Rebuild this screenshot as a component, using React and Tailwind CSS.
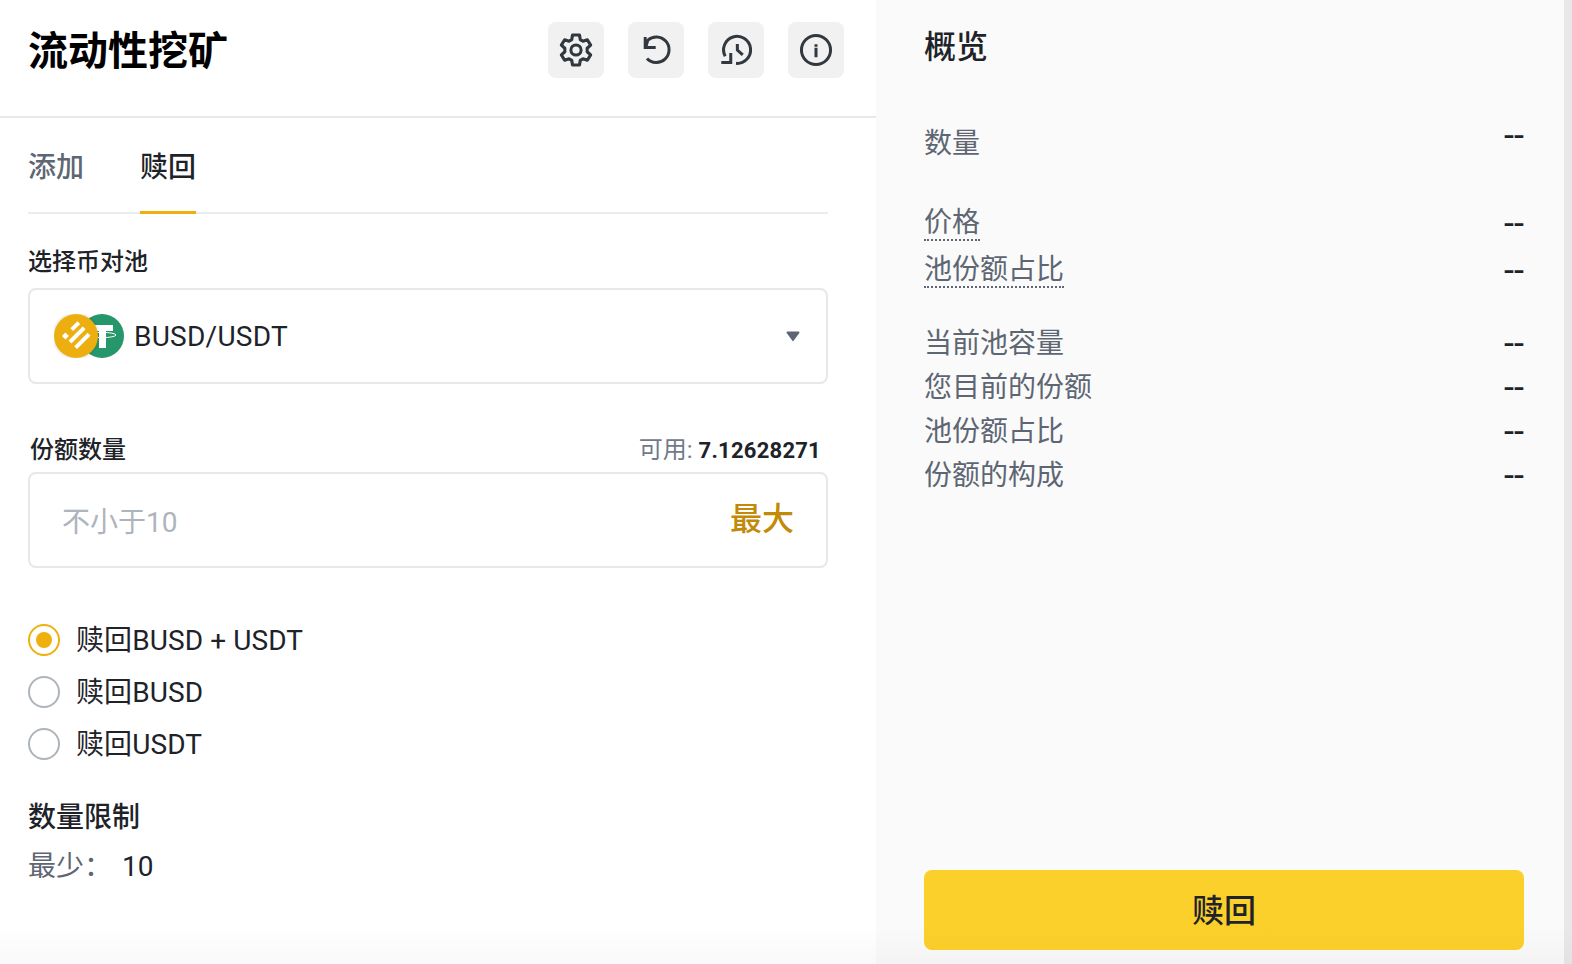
import React from 'react';

const FONT = { fontFamily: 'Roboto, "Noto Sans CJK SC", sans-serif' };

const IconButton = ({ children }) => (
  <button className="w-14 h-14 rounded-lg bg-[#f1f1f1] flex items-center justify-center text-[#32383f]">
    {children}
  </button>
);

const Gear = () => (
  <svg width="36" height="36" viewBox="0 0 24 24" fill="none" stroke="currentColor" strokeWidth="2" strokeLinejoin="round">
    <path
      transform="translate(12 12) scale(1.05) translate(-12 -12)"
      d="M9.8 2.5h4.4l.5 2.9 1.7 1 2.8-.9 2.1 3.4-2.2 2v2.2l2.2 2-2.1 3.4-2.8-.9-1.7 1-.5 2.9H9.8l-.5-2.9-1.7-1-2.8.9-2.1-3.4 2.2-2v-2.2l-2.2-2 2.1-3.4 2.8.9 1.7-1z"
    />
    <circle cx="12" cy="12" r="3.4" />
  </svg>
);

const Undo = () => (
  <svg width="36" height="36" viewBox="0 0 24 24" fill="none" stroke="currentColor" strokeWidth="2">
    <path d="M5.2 10 6.5 5.5A8.5 8.5 0 1 1 6 17.6" />
    <path d="M4.8 3.4v7h7" />
  </svg>
);

const History = () => (
  <svg width="36" height="36" viewBox="0 0 24 24" fill="none" stroke="currentColor" strokeWidth="2">
    <path d="M4.8 16.2A9 9 0 1 1 12 20.9" />
    <path d="M12.9 8v4l3.6 3.3" />
    <path d="M8.5 14v6.4H2.2" />
  </svg>
);

const Info = () => (
  <svg width="36" height="36" viewBox="0 0 24 24" fill="none" stroke="currentColor" strokeWidth="2">
    <circle cx="12" cy="12" r="9.7" />
    <path d="M12 10.5v6.4M12 8.2v1.6" />
  </svg>
);

const PairLogo = () => (
  <svg width="70" height="44" viewBox="0 0 70 44" className="shrink-0">
    <circle cx="48" cy="22" r="22" fill="#26966b" />
    <path d="M37 11h22v6h-7v17h-7V17h-8z" fill="#fff" />
    <ellipse cx="48" cy="21" rx="14" ry="2.6" fill="none" stroke="#fff" strokeWidth="1" />
    <circle cx="22" cy="22" r="24" fill="#000" opacity="0.05" />
    <circle cx="22" cy="22" r="22" fill="#edae10" />
    <g fill="#fff" transform="translate(22 22) rotate(-45)">
      <rect x="-10" y="-10" width="5" height="5" />
      <rect x="1.5" y="-9.5" width="10" height="4" />
      <rect x="-8.5" y="-2" width="20" height="4" />
      <rect x="-8.5" y="6" width="19" height="4" />
    </g>
  </svg>
);

const Radio = ({ label, checked }) => (
  <div className="h-[52px] flex items-center gap-4">
    <span className={`w-8 h-8 rounded-full border-2 flex items-center justify-center ${checked ? 'border-[#efb00e]' : 'border-[#aeb4bc]'}`}>
      {checked && <span className="w-4 h-4 rounded-full bg-[#efb00e]" />}
    </span>
    <span className="pt-[2px] text-[28px] tracking-[0.1px] text-[#1e2329]">{label}</span>
  </div>
);

const Row = ({ label, dotted, className = 'h-11', dashClass = '' }) => (
  <div className={`flex items-center justify-between ${className}`}>
    <span className={`text-[28px] text-[#5e6673] ${dotted ? 'leading-[32px] border-b-2 border-dotted border-[#5e6673]' : 'leading-[36px]'}`}>{label}</span>
    <span className={`text-[36px] leading-none text-[#1e2329] ${dashClass}`}>--</span>
  </div>
);

export default function App() {
  return (
    <div className="relative flex w-[1572px] h-[964px] overflow-hidden bg-white" style={FONT}>
      {/* left: form */}
      <div className="w-[876px] shrink-0 flex flex-col">
        <div className="h-[118px] shrink-0 border-b-2 border-[#e6e8ea] flex items-start justify-between pl-7 pr-8 pt-[22px]">
          <h1 className="mt-[2px] text-[40px] leading-[56px] font-bold text-black">流动性挖矿</h1>
          <div className="flex gap-6">
            <IconButton><Gear /></IconButton>
            <IconButton><Undo /></IconButton>
            <IconButton><History /></IconButton>
            <IconButton><Info /></IconButton>
          </div>
        </div>

        <div className="px-7 pr-12 flex flex-col">
          <div className="flex gap-14 h-[96px] border-b-2 border-[#eaecef]">
            <div className="h-[96px] pt-[30px] text-[28px] leading-[40px] font-medium text-[#5e6673]">添加</div>
            <div className="h-[96px] pt-[30px] text-[28px] leading-[40px] font-medium text-[#1e2329] border-b-[3px] border-[#efb00e]">赎回</div>
          </div>

          <div className="mt-8 text-2xl leading-8 font-medium text-[#1e2329]">选择币对池</div>
          <div className="mt-[10px] h-[96px] rounded-lg border-2 border-[#e6e8ea] flex items-center pl-6 pr-[26px]">
            <PairLogo />
            <span className="ml-[10px] pt-[2px] text-[28px] tracking-[0.25px] text-[#1e2329]">BUSD/USDT</span>
            <svg width="14" height="11" viewBox="0 0 14 11" className="ml-auto">
              <path d="M1.5.5h11a1 1 0 0 1 .8 1.6L7.8 9.6a1 1 0 0 1-1.6 0L.7 2.1A1 1 0 0 1 1.5.5z" fill="#5e6673" />
            </svg>
          </div>

          <div className="mt-[50px] flex items-center justify-between pl-[2px] pr-[7px] h-8">
            <span className="text-2xl font-medium text-[#1e2329]">份额数量</span>
            <span className="text-2xl text-[#707a8a]">可用: <span className="text-[22px] tracking-[0.25px] font-bold text-[#1e2329]">7.12628271</span></span>
          </div>
          <div className="mt-[6px] h-[96px] rounded-lg border-2 border-[#e6e8ea] flex items-center justify-between pl-8 pr-8">
            <span className="pt-[6px] text-[28px] text-[#aeb4bc]">不小于10</span>
            <span className="pb-[2px] text-[32px] font-medium text-[#c28a08]">最大</span>
          </div>

          <div className="mt-[46px] flex flex-col">
            <Radio label="赎回BUSD + USDT" checked />
            <Radio label="赎回BUSD" />
            <Radio label="赎回USDT" />
          </div>

          <div className="mt-[28px] text-[28px] leading-10 font-medium text-[#1e2329]">数量限制</div>
          <div className="mt-[9px] flex items-center text-[28px] leading-10">
            <span className="text-[#5e6673] w-[94px]">最少：</span>
            <span className="text-[#1e2329]">10</span>
          </div>
        </div>
      </div>

      {/* right: overview */}
      <div className="flex-1 bg-[#fafafa] flex flex-col pl-12 pr-10 pt-6 pb-[14px]">
        <h2 className="text-[32px] leading-[46px] font-medium text-[#1e2329]">概览</h2>
        <Row label="数量" className="h-11 mt-[52px]" dashClass="pb-[16px]" />
        <Row label="价格" dotted className="h-11 mt-[36px]" />
        <Row label="池份额占比" dotted className="h-11 mt-[3px]" />
        <Row label="当前池容量" className="h-11 mt-[29px]" />
        <Row label="您目前的份额" />
        <Row label="池份额占比" />
        <Row label="份额的构成" />
        <button className="mt-auto h-20 pt-[2px] rounded-lg bg-[#fcd02a] text-[32px] font-medium text-[#1e2329]">赎回</button>
      </div>

      {/* page scrollbar */}
      <div className="w-2 shrink-0 bg-[#e8e8e8]" />

      {/* bottom fade over the page */}
      <div className="absolute inset-x-0 bottom-0 h-10 pointer-events-none bg-gradient-to-b from-transparent to-black/[0.025]" />
    </div>
  );
}
